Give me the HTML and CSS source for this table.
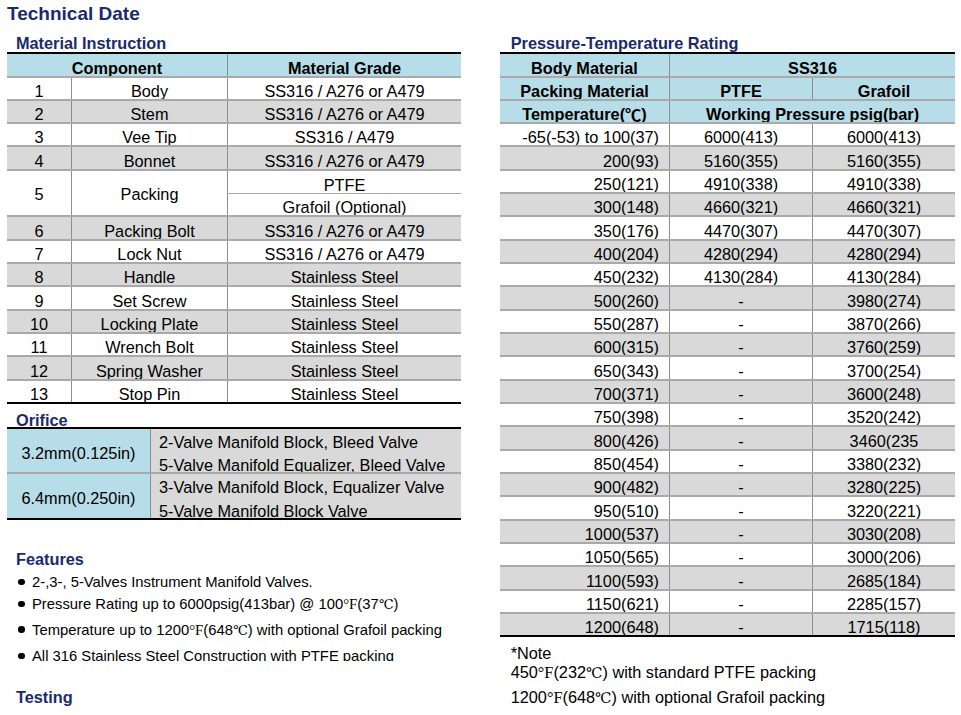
FILE: index.html
```html
<!DOCTYPE html>
<html>
<head>
<meta charset="utf-8">
<title>Technical Date</title>
<link rel="stylesheet" href="styles.css">
</head>
<body>
<div class="page">
  <div class="left">
    <h1 class="title">Technical Date</h1>
    <h2 class="sec sec-mat">Material Instruction</h2>
    <div class="tbl mat">
      <div class="mat-head">
        <div class="c h">Component</div>
        <div class="c h bl">Material Grade</div>
      </div>
      <div class="mat-row"><div class="c">1</div><div class="c bl">Body</div><div class="c bl">SS316 / A276 or A479</div></div>
      <div class="mat-row"><div class="c">2</div><div class="c bl">Stem</div><div class="c bl">SS316 / A276 or A479</div></div>
      <div class="mat-row"><div class="c">3</div><div class="c bl">Vee Tip</div><div class="c bl">SS316 / A479</div></div>
      <div class="mat-row"><div class="c">4</div><div class="c bl">Bonnet</div><div class="c bl">SS316 / A276 or A479</div></div>
      <div class="mat-row tall">
        <div class="c mid span-rows">5</div>
        <div class="c bl mid span-rows">Packing</div>
        <div class="c bl">PTFE</div>
        <div class="c bl sub">Grafoil (Optional)</div>
      </div>
      <div class="mat-row"><div class="c">6</div><div class="c bl">Packing Bolt</div><div class="c bl">SS316 / A276 or A479</div></div>
      <div class="mat-row"><div class="c">7</div><div class="c bl">Lock Nut</div><div class="c bl">SS316 / A276 or A479</div></div>
      <div class="mat-row"><div class="c">8</div><div class="c bl">Handle</div><div class="c bl">Stainless Steel</div></div>
      <div class="mat-row"><div class="c">9</div><div class="c bl">Set Screw</div><div class="c bl">Stainless Steel</div></div>
      <div class="mat-row"><div class="c">10</div><div class="c bl">Locking Plate</div><div class="c bl">Stainless Steel</div></div>
      <div class="mat-row"><div class="c">11</div><div class="c bl">Wrench Bolt</div><div class="c bl">Stainless Steel</div></div>
      <div class="mat-row"><div class="c">12</div><div class="c bl">Spring Washer</div><div class="c bl">Stainless Steel</div></div>
      <div class="mat-row"><div class="c">13</div><div class="c bl">Stop Pin</div><div class="c bl">Stainless Steel</div></div>
    </div>

    <h2 class="sec sec-ori">Orifice</h2>
    <div class="tbl ori">
      <div class="ori-row">
        <div class="ori-size">3.2mm(0.125in)</div>
        <div class="ori-desc">2-Valve Manifold Block, Bleed Valve<br>5-Valve Manifold Equalizer, Bleed Valve</div>
      </div>
      <div class="ori-row second">
        <div class="ori-size">6.4mm(0.250in)</div>
        <div class="ori-desc">3-Valve Manifold Block, Equalizer Valve<br>5-Valve Manifold Block Valve</div>
      </div>
    </div>

    <h2 class="sec sec-feat">Features</h2>
    <ul class="features">
      <li><span class="dot"></span>2-,3-, 5-Valves Instrument Manifold Valves.</li>
      <li><span class="dot"></span>Pressure Rating up to 6000psig(413bar) @ 100<span class="u">°F</span>(37<span class="uc">℃</span>)</li>
      <li><span class="dot"></span>Temperature up to 1200<span class="u">°F</span>(648<span class="uc">℃</span>) with optional Grafoil packing</li>
      <li><span class="dot"></span>All 316 Stainless Steel Construction with PTFE packing</li>
    </ul>

    <h2 class="sec sec-test">Testing</h2>
  </div>

  <div class="right">
    <h2 class="sec sec-pt">Pressure-Temperature Rating</h2>
    <div class="tbl pt">
      <div class="pt-row head first"><div class="c h">Body Material</div><div class="c h bl span2">SS316</div></div>
      <div class="pt-row head"><div class="c h">Packing Material</div><div class="c h bl">PTFE</div><div class="c h bl">Grafoil</div></div>
      <div class="pt-row head"><div class="c h">Temperature(<span class="cjk">℃</span>)</div><div class="c h bl span2">Working Pressure psig(bar)</div></div>
      <div class="pt-body">
        <div class="pt-row"><div class="c t">-65(-53) to 100(37)</div><div class="c bl">6000(413)</div><div class="c bl">6000(413)</div></div>
        <div class="pt-row"><div class="c t">200(93)</div><div class="c bl">5160(355)</div><div class="c bl">5160(355)</div></div>
        <div class="pt-row"><div class="c t">250(121)</div><div class="c bl">4910(338)</div><div class="c bl">4910(338)</div></div>
        <div class="pt-row"><div class="c t">300(148)</div><div class="c bl">4660(321)</div><div class="c bl">4660(321)</div></div>
        <div class="pt-row"><div class="c t">350(176)</div><div class="c bl">4470(307)</div><div class="c bl">4470(307)</div></div>
        <div class="pt-row"><div class="c t">400(204)</div><div class="c bl">4280(294)</div><div class="c bl">4280(294)</div></div>
        <div class="pt-row"><div class="c t">450(232)</div><div class="c bl">4130(284)</div><div class="c bl">4130(284)</div></div>
        <div class="pt-row"><div class="c t">500(260)</div><div class="c bl">-</div><div class="c bl">3980(274)</div></div>
        <div class="pt-row"><div class="c t">550(287)</div><div class="c bl">-</div><div class="c bl">3870(266)</div></div>
        <div class="pt-row"><div class="c t">600(315)</div><div class="c bl">-</div><div class="c bl">3760(259)</div></div>
        <div class="pt-row"><div class="c t">650(343)</div><div class="c bl">-</div><div class="c bl">3700(254)</div></div>
        <div class="pt-row"><div class="c t">700(371)</div><div class="c bl">-</div><div class="c bl">3600(248)</div></div>
        <div class="pt-row"><div class="c t">750(398)</div><div class="c bl">-</div><div class="c bl">3520(242)</div></div>
        <div class="pt-row"><div class="c t">800(426)</div><div class="c bl">-</div><div class="c bl">3460(235</div></div>
        <div class="pt-row"><div class="c t">850(454)</div><div class="c bl">-</div><div class="c bl">3380(232)</div></div>
        <div class="pt-row"><div class="c t">900(482)</div><div class="c bl">-</div><div class="c bl">3280(225)</div></div>
        <div class="pt-row"><div class="c t">950(510)</div><div class="c bl">-</div><div class="c bl">3220(221)</div></div>
        <div class="pt-row"><div class="c t">1000(537)</div><div class="c bl">-</div><div class="c bl">3030(208)</div></div>
        <div class="pt-row"><div class="c t">1050(565)</div><div class="c bl">-</div><div class="c bl">3000(206)</div></div>
        <div class="pt-row"><div class="c t">1100(593)</div><div class="c bl">-</div><div class="c bl">2685(184)</div></div>
        <div class="pt-row"><div class="c t">1150(621)</div><div class="c bl">-</div><div class="c bl">2285(157)</div></div>
        <div class="pt-row"><div class="c t">1200(648)</div><div class="c bl">-</div><div class="c bl">1715(118)</div></div>
      </div>
    </div>
    <div class="note">
      <div class="note-first">*Note</div>
      <div class="note-line">450<span class="u">°F</span>(232<span class="uc">℃</span>) with standard PTFE packing</div>
      <div class="note-line">1200<span class="u">°F</span>(648<span class="uc">℃</span>) with optional Grafoil packing</div>
    </div>
  </div>
</div>
</body>
</html>
```

FILE: styles.css
```css
* { box-sizing: border-box; }

body {
  margin: 0;
  background: #ffffff;
  color: #000000;
  font-family: "Liberation Sans", Arial, sans-serif;
}

.page {
  display: flex;
  align-items: flex-start;
  padding-left: 7px;
}

.left { width: 454px; }

.right {
  width: 455px;
  margin-left: 39px;
  padding-top: 35px;
}

.title {
  margin: 0;
  padding-top: 2px;
  font-size: 19px;
  line-height: 24px;
  font-weight: bold;
  color: #1a2b6d;
}

.sec {
  margin: 0;
  font-size: 16.3px;
  line-height: 17px;
  font-weight: bold;
  color: #1a2b6d;
}

.sec-mat { margin: 9px 0 0 9px; }
.sec-pt { margin-left: 10.7px; }
.sec-ori { margin: 8.5px 0 0 9px; line-height: 14px; }
.sec-feat { margin: 29.15px 0 0 9px; line-height: 18px; }
.sec-test { margin: 27.35px 0 0 9px; line-height: 18px; }

/* generic table cells */
.tbl { font-size: 16.3px; }

.c {
  display: flex;
  align-items: flex-end;
  justify-content: center;
  line-height: 15px;
  overflow: hidden;
  white-space: nowrap;
  min-width: 0;
}

.bl { border-left: 1px solid #8e8e8e; }
.h { font-weight: bold; }
.mid { align-items: center; padding-top: 2px; }
.cjk {
  font-family: "Noto Sans CJK SC", sans-serif;
  line-height: 1;
}

/* material table */
.mat {
  border-top: 2px solid #000;
  border-bottom: 2px solid #000;
}

.mat-head {
  display: grid;
  grid-template-columns: 220px 234px;
  height: 21.5px;
  background: #b7dde8;
}

.mat-row {
  display: grid;
  grid-template-columns: 64px 156px 234px;
  height: 23.33px;
  border-top: 2px solid #a9a9a9;
  background: #ffffff;
}

.mat-row:nth-child(odd) { background: #d9d9d9; }

.mat-row.tall {
  height: 46.67px;
  grid-template-rows: 1fr 1fr;
}

.span-rows { grid-row: 1 / 3; }
.mat-row .sub {
  grid-column: 3;
  border-top: 1px solid #a9a9a9;
}

/* orifice table */
.ori {
  border-top: 2px solid #000;
  border-bottom: 2px solid #000;
}

.ori-row {
  display: grid;
  grid-template-columns: 143px 311px;
  height: 43.9px;
}

.ori-row.second {
  height: 46px;
  border-top: 2px solid #a9a9a9;
}

.ori-size {
  display: flex;
  align-items: center;
  justify-content: center;
  padding-top: 5px;
  background: #b7dde8;
  white-space: nowrap;
}

.ori-desc {
  background: #d9d9d9;
  border-left: 1px solid #8e8e8e;
  padding: 2px 0 0 8px;
  line-height: 23.3px;
  white-space: nowrap;
  overflow: hidden;
}

/* features */
.features {
  list-style: none;
  margin: 3.55px 0 0 0;
  padding: 0 0 0 11px;
  height: 89.5px;
  overflow: hidden;
  font-size: 14.8px;
}

.features li {
  line-height: 22px;
  white-space: nowrap;
}

.features li:nth-child(3) { margin-top: 2.4px; }
.features li:nth-child(4) { margin-top: 3.5px; }

.dot {
  display: inline-block;
  width: 6.5px;
  height: 6.5px;
  border-radius: 50%;
  background: #000;
  vertical-align: 1.8px;
  margin-right: 7.5px;
}

.u { font-family: "Liberation Serif", "DejaVu Serif", serif; }
.uc { font-family: "DejaVu Serif", "Liberation Serif", serif; font-size: 0.9em; }

/* pressure-temperature table */
.pt {
  border-top: 2px solid #000;
  border-bottom: 2px solid #000;
}

.pt-row {
  display: grid;
  grid-template-columns: 169px 143px 143px;
  height: 23.33px;
  border-top: 2px solid #a9a9a9;
}

.pt-row.head { background: #b7dde8; }
.pt-row.head.first { height: 21.5px; border-top: 0; }
.span2 { grid-column: 2 / 4; }

.pt-body .pt-row:nth-child(even) { background: #d9d9d9; }

.c.t {
  justify-content: flex-end;
  padding-right: 10px;
}

/* note */
.note {
  margin-top: 9.25px;
  padding-left: 10.7px;
  font-size: 16.3px;
}

.note-first { line-height: 13.4px; }
.note-line { line-height: 24px; white-space: nowrap; }
```
